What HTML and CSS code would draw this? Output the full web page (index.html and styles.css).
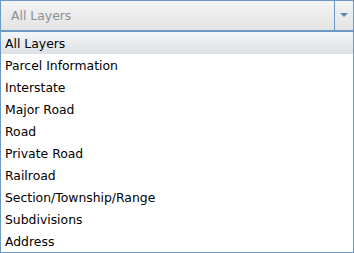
FILE: index.html
```html
<!DOCTYPE html>
<html lang="en">

<head>
  <meta charset="UTF-8" />
  <title>Layers</title>
  <link rel="stylesheet" href="styles.css">
</head>

<body>

  <div class="layer-picker">
    <div class="combo">
      <div class="combo-value">All Layers</div>
      <div class="combo-button">
        <svg width="8" height="5" viewBox="0 0 8 5"><polygon points="0,0 8,0 4,4" fill="#5b87b5" /></svg>
      </div>
    </div>

    <ul class="layer-list">
      <li class="selected">All Layers</li>
      <li>Parcel Information</li>
      <li>Interstate</li>
      <li>Major Road</li>
      <li>Road</li>
      <li>Private Road</li>
      <li>Railroad</li>
      <li>Section/Township/Range</li>
      <li>Subdivisions</li>
      <li>Address</li>
    </ul>
  </div>

</body>

</html>
```

FILE: styles.css
```css
body {
  margin: 0;
  font-family: 'DejaVu Sans', Verdana, sans-serif;
  font-size: 12.4px;
  color: #000;
  background: #fff;
}

.layer-picker {
  width: 354px;
}

.combo {
  display: flex;
  height: 29px;
  border: 1px solid #6d98c3;
  background: linear-gradient(to bottom, #f3f3f3, #e4e4e4);
}

.combo-value {
  flex: 1;
  padding-left: 10px;
  line-height: 30px;
  color: #8a9099;
}

.combo-button {
  width: 18px;
  border-left: 1px solid #6d98c3;
  display: flex;
  align-items: center;
  justify-content: center;
}

.combo-button svg {
  margin-top: -1px;
}

.layer-list {
  list-style: none;
  margin: 0;
  padding: 0;
  border: 1px solid #6d98c3;
}

.layer-list li {
  height: 21px;
  padding-top: 1px;
  line-height: 22px;
  padding-left: 4px;
  white-space: nowrap;
}

.layer-list li.selected {
  background: linear-gradient(to bottom, #f4f5f6, #dde1e5);
}
```
